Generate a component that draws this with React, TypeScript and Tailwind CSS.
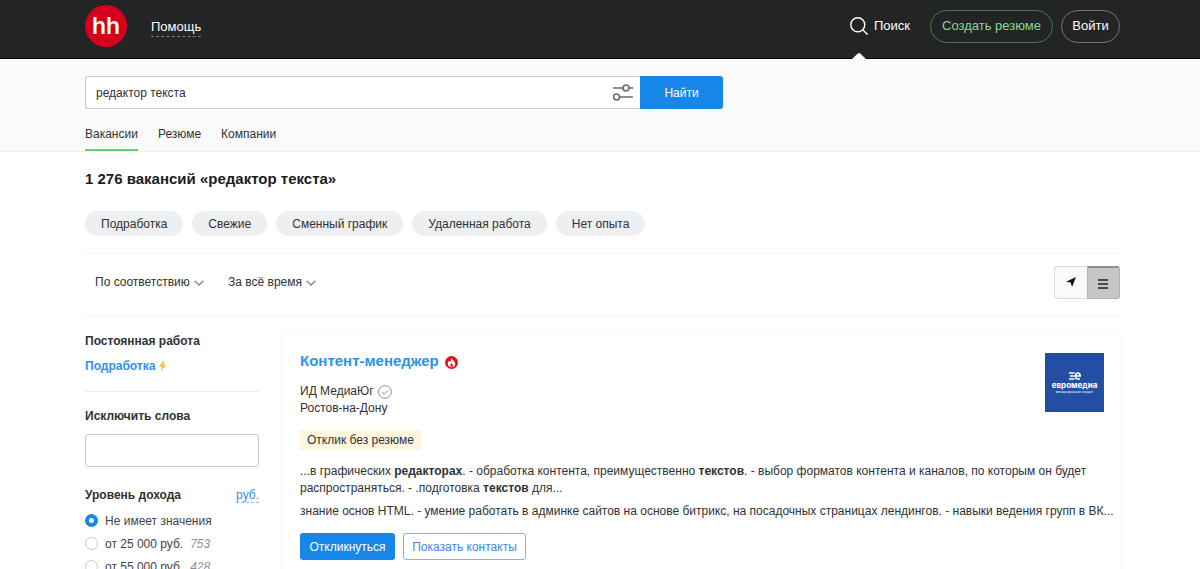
import React from "react";

const tags = ["Подработка", "Свежие", "Сменный график", "Удаленная работа", "Нет опыта"];

const incomes = [
  { label: "Не имеет значения", count: "" },
  { label: "от 25 000 руб.", count: "753" },
  { label: "от 55 000 руб.", count: "428" },
];

const Chevron = () => (
  <svg className="w-[10px] h-[6px] mt-[2px] shrink-0" viewBox="0 0 10 6" fill="none" stroke="#8a8f96" strokeWidth="1.5">
    <path d="M.6.8 5 5.1 9.4.8" />
  </svg>
);

const Header = () => (
  <header className="h-[59px] bg-[#222426] border-b border-black text-white text-[13px] pl-[85px] pr-20 flex items-center">
    <a href="#" aria-label="hh" className="mb-[6px] w-[42px] h-[42px] rounded-full bg-[#d6001c] flex items-center justify-center">
      <span className="font-[Inter] font-semibold text-[23px] leading-none">hh</span>
    </a>
    <a href="#" className="ml-6 mb-1 leading-[18px] border-b border-dashed border-[#7c7e80]">
      Помощь
    </a>
    <nav className="ml-auto h-full pb-[6px] flex items-center">
      <a href="#" className="relative h-full flex items-center gap-[6px] mr-5">
        <svg className="w-[18px] h-[18px]" viewBox="0 0 18 18" fill="none" stroke="#fff" strokeWidth="1.4">
          <circle cx="7.8" cy="7.8" r="7" />
          <path d="m12.8 12.8 4.8 4.8" />
        </svg>
        Поиск
        <svg className="absolute left-[2px] -bottom-[7px] w-[14px] h-[6px]" viewBox="0 0 14 6" fill="#fafafa">
          <path d="M0 6 5.800.6q1.200-1.200 2.400 0L14 6z" />
        </svg>
      </a>
      <button className="h-[33px] w-[123px] rounded-full border border-[#4c7550] text-[#90d594] mr-2">Создать резюме</button>
      <button className="h-[33px] w-[59px] rounded-full border border-[#74777a]">Войти</button>
    </nav>
  </header>
);

const Search = () => (
  <section className="bg-[#fafafa] border-b border-[#f1f1f1] pl-[85px] pr-20 pt-[17px]">
    <form className="flex h-[33px] max-w-[638px]">
      <div className="flex flex-1 items-center bg-white border border-r-0 border-[#c8cacc] rounded-l-[3px] pr-[7px]">
        <input aria-label="Поиск" className="flex-1 px-[10px] outline-none" defaultValue="редактор текста" />
        <button type="button" aria-label="Фильтры">
          <svg className="w-5 h-[18px]" viewBox="0 0 20 18" fill="none" stroke="#6a6e72" strokeWidth="1.7">
            <path d="M0 4h10M16 4h4M6.500 13H20" />
            <circle cx="13" cy="4" r="3" />
            <circle cx="3.500" cy="13" r="3" />
          </svg>
        </button>
      </div>
      <button type="button" className="w-[83px] bg-[#1686e8] text-white font-medium rounded-r-[3px]">Найти</button>
    </form>
    <nav className="flex gap-5 mt-[17px]">
      <a href="#" className="h-[25px] leading-4 border-b-2 border-[#6bc773]">Вакансии</a>
      <a href="#" className="leading-4">Резюме</a>
      <a href="#" className="leading-4">Компании</a>
    </nav>
  </section>
);

const Toolbar = () => (
  <div className="flex items-center h-16 border-y border-[#f2f2f2] pl-[10px] pb-[6px]">
    <label className="flex items-center gap-1 mr-6">
      <select aria-label="Сортировка" className="appearance-none outline-none">
        <option>По соответствию</option>
      </select>
      <Chevron />
    </label>
    <label className="flex items-center gap-1">
      <select aria-label="Период" className="appearance-none outline-none">
        <option>За всё время</option>
      </select>
      <Chevron />
    </label>
    <div className="ml-auto flex h-[33px] w-[66px]">
      <button aria-label="На карте" className="flex-1 flex items-center justify-center bg-[#fafafa] border border-r-0 border-[#dcdcdc] rounded-l-[3px]">
        <svg className="w-[10px] h-[10px]" viewBox="0 0 10 10" fill="#111">
          <path d="M10 0 6 10 4.700 5.600 0 4.700z" />
        </svg>
      </button>
      <button aria-label="Списком" className="flex-1 flex items-center justify-center pt-[2px] bg-[#c6c6c6] border border-t-2 border-[#b4b4b4] border-t-[#8e8e8e] rounded-r-[3px]">
        <svg className="w-[10px] h-[10px]" viewBox="0 0 10 10" stroke="#222" strokeWidth="1.600">
          <path d="M0 1h10M0 5h10M0 9h10" />
        </svg>
      </button>
    </div>
  </div>
);

const Sidebar = () => (
  <aside className="w-[174px] shrink-0 pt-4">
    <h2 className="font-bold leading-4">Постоянная работа</h2>
    <a href="#" className="mt-[9px] flex items-center gap-1 font-bold leading-4 text-[#2b93ee]">
      Подработка
      <svg className="w-[7px] h-[10px]" viewBox="0 0 7 10" fill="#fbbf2c">
        <path d="M4.300 0 0 5.700h2.600L1.800 10 7 3.900H4.200L5.600 0z" />
      </svg>
    </a>
    <hr className="mt-[17px] border-[#ececec]" />
    <label htmlFor="exclude" className="block mt-4 font-bold leading-4">Исключить слова</label>
    <input id="exclude" className="mt-[10px] w-full h-[33px] px-2 border border-[#c8cacc] rounded-[3px] outline-none" />
    <div className="mt-5 flex justify-between leading-4">
      <h2 className="font-bold">Уровень дохода</h2>
      <a href="#" className="h-4 text-[#2b93ee] border-b border-dashed border-[#8fc5f5]">руб.</a>
    </div>
    <div className="mt-[6px] flex flex-col">
      {incomes.map((item, i) => (
        <label key={item.label} className="flex items-center h-[23px] gap-[7px] text-[#444]">
          <input
            type="radio"
            name="income"
            defaultChecked={i === 0}
            className="appearance-none w-[13px] h-[13px] shrink-0 rounded-full border border-[#c8cacc] bg-white checked:border-4 checked:border-[#1686e8]"
          />
          <span>{item.label}</span>
          {item.count && <i className="text-[#8d9196]">{item.count}</i>}
        </label>
      ))}
    </div>
  </aside>
);

const VacancyCard = () => (
  <article className="mt-[18px] flex-1 min-w-0 rounded px-4 pt-4 pb-6 shadow-[0_0_8px_rgba(0,0,0,0.06)]">
    <div className="flex justify-between">
      <div>
        <h2 className="flex items-center gap-[6px] text-[15px] leading-5 font-bold text-[#2b93ee]">
          <a href="#">Контент-менеджер</a>
          <svg className="w-[13px] h-[13px] mt-[2px]" viewBox="0 0 13 13">
            <circle cx="6.500" cy="6.500" r="6.500" fill="#dd1515" />
            <path d="M5.900 1.500c.3 1.800 4.300 3.200 4.300 6.200 0 2.200-1.700 3.500-3.700 3.500S2.800 9.800 2.800 7.800c0-1.300.7-2.200 1.500-3 .1.600.3 1 .8 1.200C5.900 4.900 6.300 3.200 5.900 1.500z" fill="#fff" />
            <path d="M6.700 6.700c-.1 1-1.500 1.400-1.500 2.700 0 .9.600 1.400 1.400 1.400S8 10.300 8 9.400C8 8.300 6.800 7.800 6.700 6.700z" fill="#dd1515" />
          </svg>
        </h2>
        <p className="mt-3 flex items-center gap-1 leading-[17px]">
          ИД МедиаЮг
          <svg className="w-[14px] h-[14px]" viewBox="0 0 14 14" fill="none" stroke="#8d9196">
            <circle cx="7" cy="7" r="6.400" />
            <path d="m4.100 7 2.200 2.200 3.800-3.900" />
          </svg>
        </p>
        <p className="leading-[17px]">Ростов-на-Дону</p>
        <span className="inline-block mt-[13px] px-[7px] h-5 leading-5 rounded-[3px] bg-[#fff6e0]">Отклик без резюме</span>
      </div>
      <div className="mt-[2px] w-[59px] h-[59px] bg-[#234fa3] text-white flex flex-col items-center pt-[19px] font-[Inter]">
        <svg className="w-3 h-2" viewBox="0 0 12 8" fill="none" stroke="#fff" strokeWidth="1.600">
          <path d="M0 1h5.500M1 4h4.500M0 7h5.500M6.500 4h4.700C11.200 2 10.200 1 8.800 1 7.200 1 6.500 2.200 6.500 4S7.400 7 9 7h2" />
        </svg>
        <span className="mt-[2px] text-[8px] leading-[7px] font-bold">евромедиа</span>
        <span className="mt-[1px] text-[3px] leading-[4px]">международный холдинг</span>
      </div>
    </div>
    <p className="mt-[13px] leading-[17px]">
      ...в графических <b>редакторах</b>. - обработка контента, преимущественно <b>текстов</b>. - выбор форматов контента и
      каналов, по которым он будет распространяться. - .подготовка <b>текстов</b> для...
    </p>
    <p className="mt-[6px] -mr-3 leading-[17px]">
      знание основ HTML. - умение работать в админке сайтов на основе битрикс, на посадочных страницах лендингов. - навыки
      ведения групп в ВК...
    </p>
    <div className="mt-[13px] flex gap-2">
      <button className="w-[95px] h-[27px] rounded-[3px] bg-[#1686e8] text-white font-medium">Откликнуться</button>
      <button className="w-[123px] h-[27px] rounded-[3px] border border-[#7fb4f2] text-[#3f86e8]">Показать контакты</button>
    </div>
  </article>
);

const App = () => {
  return (
    <div className="h-screen overflow-hidden bg-white text-xs text-[#303233] font-['Liberation_Sans',Arial,sans-serif]">
      <Header />
      <Search />
      <main className="pl-[85px] pr-20">
        <h1 className="pt-[15px] text-[15px] leading-6 font-bold text-[#1c1d1e]">1 276 вакансий «редактор текста»</h1>
        <div className="mt-5 mb-[17px] flex gap-[9px]">
          {tags.map((tag) => (
            <button key={tag} className="h-[25px] px-4 rounded-full bg-[#edeff0]">
              {tag}
            </button>
          ))}
        </div>
        <Toolbar />
        <div className="flex gap-[25px]">
          <Sidebar />
          <VacancyCard />
        </div>
      </main>
    </div>
  );
};

export default App;
